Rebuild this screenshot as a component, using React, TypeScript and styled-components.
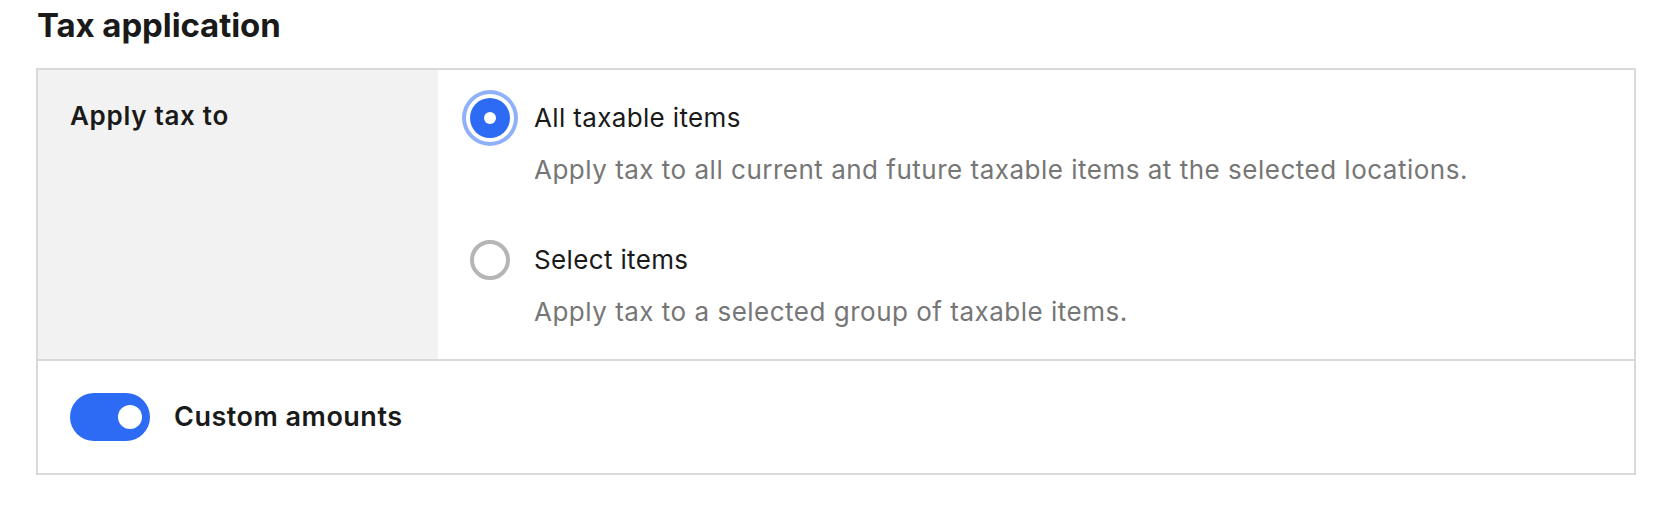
import React from "react"
import styled, { createGlobalStyle } from "styled-components"

const GlobalStyle = createGlobalStyle`
    html, body {
        margin: 0;
        padding: 0;
        background: #ffffff;
        font-family: Inter, "Noto Sans", "Liberation Sans", sans-serif;
        color: #1a1a1a;
    }
`

const Page = styled.div`
    padding: 5px 0 0 36px;
    width: 1600px;
`

const Title = styled.h2`
    margin: 0 0 23px 1px;
    font-size: 33px;
    line-height: 40px;
    font-weight: 700;
    letter-spacing: -0.1px;
    color: #1a1a1a;
`

const Panel = styled.div`
    border: 2px solid #d9d9d9;
`

const Row = styled.div`
    display: flex;
`

const Divider = styled.div`
    height: 2px;
    background: #d9d9d9;
`

const SideLabel = styled.div`
    width: 400px;
    flex-shrink: 0;
    box-sizing: border-box;
    background: #f2f2f2;
    padding: 28px 0 28px 32px;
    font-size: 26px;
    line-height: 36px;
    font-weight: 600;
    letter-spacing: 0.7px;
    color: #1a1a1a;
`

const Options = styled.div`
    flex: 1;
    display: flex;
    flex-direction: column;
    gap: 52px;
    padding: 28px 0 29px 32px;
`

const Option = styled.label`
    display: grid;
    grid-template-columns: 40px 1fr;
    column-gap: 24px;
    row-gap: 14px;
    align-items: center;
    cursor: pointer;
`

const Radio = styled.span<{ $checked?: boolean }>`
    width: 40px;
    height: 40px;
    box-sizing: border-box;
    border-radius: 50%;
    display: flex;
    align-items: center;
    justify-content: center;
    background: ${p => (p.$checked ? "#2d6bf5" : "#ffffff")};
    border: ${p => (p.$checked ? "none" : "4px solid #b5b5b5")};
    box-shadow: ${p => (p.$checked ? "0 0 0 4px #ffffff, 0 0 0 8px #8fb1f9" : "none")};

    &::after {
        content: "";
        display: ${p => (p.$checked ? "block" : "none")};
        width: 12px;
        height: 12px;
        border-radius: 50%;
        background: #ffffff;
    }
`

const OptionTitle = styled.span`
    font-size: 26px;
    line-height: 36px;
    letter-spacing: 0.35px;
    color: #1a1a1a;
`

const OptionText = styled.span`
    grid-column: 2;
    font-size: 26px;
    line-height: 36px;
    letter-spacing: 0.5px;
    color: #767676;
`

const ToggleRow = styled.div`
    display: flex;
    align-items: center;
    gap: 24px;
    padding: 32px 32px;
`

const Toggle = styled.span<{ $on?: boolean }>`
    width: 80px;
    height: 48px;
    box-sizing: border-box;
    border-radius: 24px;
    padding: 12px 8px 12px 12px;
    display: flex;
    justify-content: ${p => (p.$on ? "flex-end" : "flex-start")};
    background: ${p => (p.$on ? "#2d6bf5" : "#cccccc")};

    &::after {
        content: "";
        width: 24px;
        height: 24px;
        border-radius: 50%;
        background: #ffffff;
    }
`

const ToggleLabel = styled.span`
    font-size: 27px;
    line-height: 36px;
    font-weight: 600;
    letter-spacing: 0.5px;
    color: #1a1a1a;
`

const options = [
    {
        title: "All taxable items",
        text: "Apply tax to all current and future taxable items at the selected locations.",
        checked: true,
    },
    {
        title: "Select items",
        text: "Apply tax to a selected group of taxable items.",
        checked: false,
    },
]

export default function App() {
    return (
        <Page>
            <GlobalStyle />
            <Title>Tax application</Title>
            <Panel>
                <Row>
                    <SideLabel>Apply tax to</SideLabel>
                    <Options>
                        {options.map(o => (
                            <Option key={o.title}>
                                <Radio $checked={o.checked} />
                                <OptionTitle>{o.title}</OptionTitle>
                                <OptionText>{o.text}</OptionText>
                            </Option>
                        ))}
                    </Options>
                </Row>
                <Divider />
                <ToggleRow>
                    <Toggle $on />
                    <ToggleLabel>Custom amounts</ToggleLabel>
                </ToggleRow>
            </Panel>
        </Page>
    )
}
